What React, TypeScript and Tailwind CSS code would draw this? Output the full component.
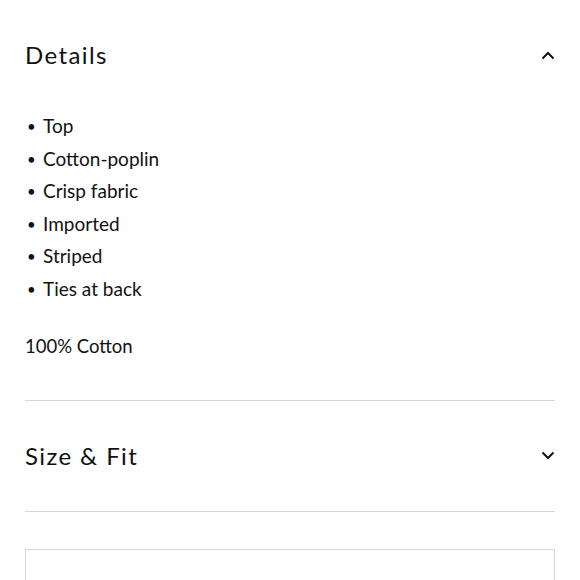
const details = ['Top', 'Cotton-poplin', 'Crisp fabric', 'Imported', 'Striped', 'Ties at back'];

function Chevron({ up }: { up?: boolean }) {
  return (
    <svg width="14" height="9" viewBox="0 0 14 9" fill="none" className="shrink-0">
      <polyline
        points={up ? '1.5,7.5 7,2 12.5,7.5' : '1.5,1.5 7,7 12.5,1.5'}
        stroke="#111"
        strokeWidth="2"
      />
    </svg>
  );
}

export default function App() {
  return (
    <div className="w-[580px] h-[580px] overflow-hidden bg-white px-[25px] text-[#111] font-['Lato',sans-serif]">
      <div className="flex h-[110px] items-center justify-between">
        <h2 className="text-[24px] tracking-[1.4px] leading-none">Details</h2>
        <Chevron up />
      </div>

      <ul className="text-[19px] leading-[32.5px]">
        {details.map((d) => (
          <li key={d} className="flex items-center">
            <span className="w-[18px] pl-[2px] text-[15px]">•</span>
            <span>{d}</span>
          </li>
        ))}
      </ul>

      <p className="mt-[25px] text-[18.5px] leading-[32.5px]">100% Cotton</p>

      <div className="mt-[37px] border-t border-[#d6d6d6]" />

      <div className="flex h-[111px] items-center justify-between border-b border-[#d6d6d6]">
        <h2 className="text-[24px] tracking-[1.4px] leading-none">Size &amp; Fit</h2>
        <Chevron />
      </div>

      <div className="mt-[37px] h-[80px] border border-[#d6d6d6]" />
    </div>
  );
}
